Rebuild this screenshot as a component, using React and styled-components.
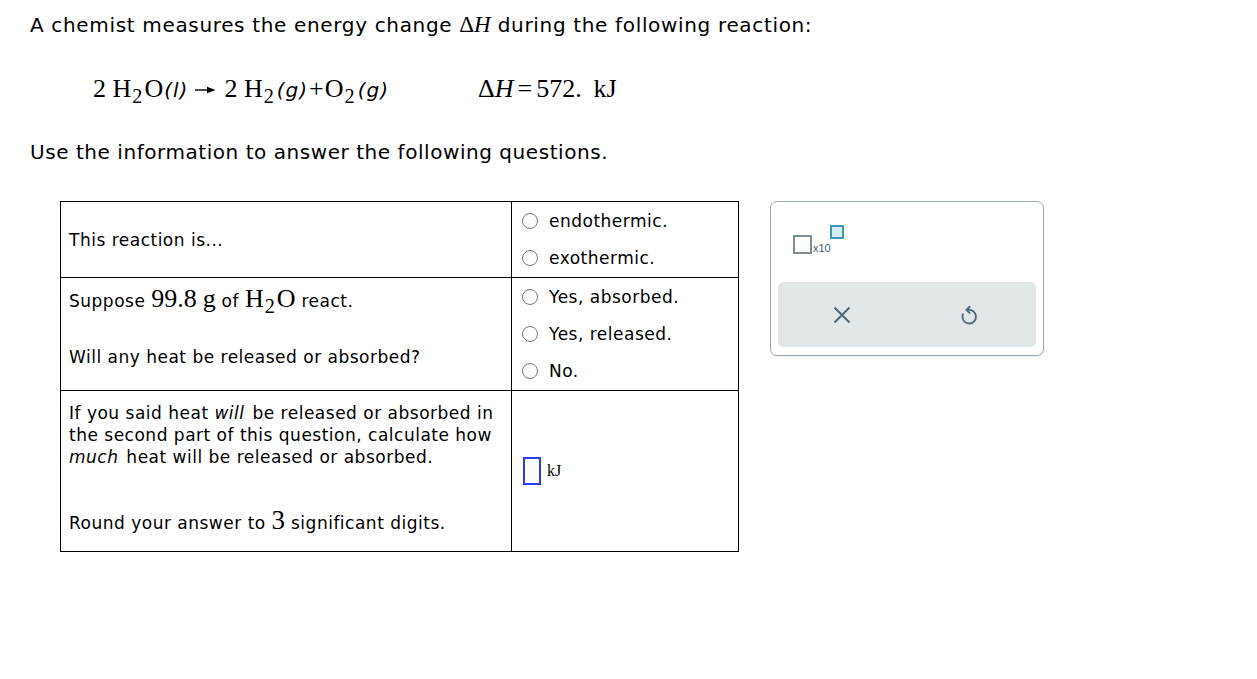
import React from "react";
import styled, { createGlobalStyle } from "styled-components";

const GlobalStyle = createGlobalStyle`
  html, body {
    margin: 0;
    padding: 0;
    background: #ffffff;
  }
  body {
    font-family: "DejaVu Sans", Verdana, sans-serif;
    color: #000;
  }
`;

const Page = styled.div`
  padding: 11px 0 0 30px;
`;

const Heading = styled.p`
  margin: 0;
  font-size: 20px;
  letter-spacing: 0.66px;
  line-height: 28px;
`;

const Serif = styled.span`
  font-family: "Liberation Serif", "Times New Roman", serif;
  font-size: ${(p) => p.size || 26}px;
  font-style: ${(p) => (p.italic ? "italic" : "normal")};
  letter-spacing: 0;
`;

const SansItalic = styled.span`
  font-family: "DejaVu Sans", Verdana, sans-serif;
  font-style: italic;
  font-size: 20px;
  letter-spacing: 1px;
  margin-left: 1px;
`;

const Em = styled.em`
  font-style: italic;
  padding-right: 2px;
`;

const Sub = styled.sub`
  font-size: 0.78em;
  vertical-align: -0.32em;
  line-height: 0;
  margin: 0 2px 0 1px;
`;

const Op = styled.span`
  margin: 0 ${(p) => p.space || 1}px;
`;

const Equation = styled.div`
  display: flex;
  align-items: baseline;
  margin: 28px 0 0 63px;
  height: 44px;
  line-height: 44px;
`;

const EquationLeft = styled.div`
  width: 385px;
  white-space: nowrap;
`;

const Arrow = styled.span`
  display: inline-flex;
  margin: 0 8px 0 7px;
  vertical-align: 3px;
`;

const Instruction = styled.p`
  margin: 27px 0 0 0;
  font-size: 20px;
  letter-spacing: 0.55px;
  line-height: 28px;
`;

const Workspace = styled.div`
  display: flex;
  align-items: flex-start;
  gap: 31px;
  margin: 35px 0 0 60px;
`;

const Table = styled.table`
  border-collapse: collapse;
  font-size: 17px;
  letter-spacing: 0.5px;
  line-height: 22px;
`;

const Cell = styled.td`
  border: 1px solid #000;
  vertical-align: ${(p) => p.valign || "middle"};
  width: ${(p) => p.w}px;
  height: ${(p) => p.h}px;
  padding: ${(p) => p.pad || "0 8px"};
  box-sizing: border-box;
`;

const Options = styled.div`
  display: flex;
  flex-direction: column;
  gap: ${(p) => p.gap}px;
  padding: 0 0 0 10px;
`;

const Option = styled.label`
  display: flex;
  align-items: center;
  gap: 11px;
  height: 22px;
`;

const Radio = styled.span`
  width: 16px;
  height: 16px;
  border: 1px solid #767676;
  border-radius: 50%;
  box-sizing: border-box;
  flex-shrink: 0;
`;

const LeftBlock = styled.div`
  display: flex;
  flex-direction: column;
  justify-content: space-between;
  height: ${(p) => p.h}px;
`;

const Answer = styled.div`
  display: flex;
  align-items: center;
  gap: 6px;
  padding-left: 11px;
`;

const InputBox = styled.span`
  display: inline-block;
  width: 14px;
  height: 24px;
  border: 2px solid #2b3cf5;
  box-sizing: content-box;
`;

const Panel = styled.div`
  width: 274px;
  height: 155px;
  border: 1px solid #9aa8b0;
  border-radius: 7px;
  box-sizing: border-box;
  padding: 0 7px;
  display: flex;
  flex-direction: column;
  box-shadow: 0 1px 2px rgba(0, 0, 0, 0.08);
`;

const Tools = styled.div`
  height: 80px;
  display: flex;
  align-items: flex-start;
  padding: 23px 0 0 15px;
  box-sizing: border-box;
`;

const Exponent = styled.div`
  position: relative;
  display: flex;
  align-items: flex-end;
  height: 29px;
`;

const BaseBox = styled.span`
  width: 15px;
  height: 15px;
  border: 2px solid #7f8e96;
  background: #fff;
`;

const TimesTen = styled.span`
  font-family: "Liberation Sans", Arial, sans-serif;
  font-size: 11px;
  color: #45616e;
  margin-left: 1px;
  line-height: 12px;
`;

const PowerBox = styled.span`
  position: absolute;
  left: 37px;
  top: 0;
  width: 10px;
  height: 10px;
  border: 2px solid #3f97b3;
  background: #d3ebf3;
`;

const ButtonBar = styled.div`
  height: 65px;
  background: #e1e6e9;
  border-radius: 5px;
  display: flex;
  align-items: center;
  justify-content: space-around;
  padding: 0 4px 0 0;
`;

const IconButton = styled.button`
  border: none;
  background: transparent;
  width: 40px;
  height: 40px;
  display: flex;
  align-items: center;
  justify-content: center;
  color: #4a6a78;
  padding: 0;
`;

const ReactionArrow = () => (
  <svg width="21" height="8" viewBox="0 0 21 8">
    <path d="M0 4 H14" stroke="#000" strokeWidth="1.4" />
    <path d="M12 0.8 L20.5 4 L12 7.2 Z" fill="#000" />
  </svg>
);

const CloseIcon = () => (
  <svg width="22" height="22" viewBox="0 0 22 22" fill="none">
    <path d="M3.5 3.5 L18.5 18.5 M18.5 3.5 L3.5 18.5" stroke="currentColor" strokeWidth="2" />
  </svg>
);

const UndoIcon = () => (
  <svg width="26" height="26" viewBox="0 0 24 24" fill="none">
    <path
      d="M6.3 11.3 A6.3 6.3 0 1 0 10.5 7.5"
      stroke="currentColor"
      strokeWidth="1.7"
      strokeLinecap="round"
    />
    <path
      d="M12.6 4.4 L9.6 7.4 L12.6 10"
      stroke="currentColor"
      strokeWidth="1.7"
      strokeLinecap="round"
      strokeLinejoin="round"
    />
  </svg>
);

const App = () => {
  return (
    <>
      <GlobalStyle />
      <Page>
        <Heading>
          A chemist measures the energy change{" "}
          <Serif size={23}>
            Δ<Serif size={23} italic>H</Serif>
          </Serif>{" "}
          during the following reaction:
        </Heading>

        <Equation>
          <EquationLeft>
            <Serif>
              2 H<Sub>2</Sub>O
            </Serif>
            <SansItalic>(l)</SansItalic>
            <Arrow>
              <ReactionArrow />
            </Arrow>
            <Serif>
              2 H<Sub>2</Sub>
            </Serif>
            <SansItalic>(g)</SansItalic>
            <Serif>
              <Op>+</Op>O<Sub>2</Sub>
            </Serif>
            <SansItalic>(g)</SansItalic>
          </EquationLeft>
          <Serif>
            Δ<Serif italic>H</Serif>
            <Op space={4}>=</Op>572.&nbsp;&thinsp;kJ
          </Serif>
        </Equation>

        <Instruction>Use the information to answer the following questions.</Instruction>
      </Page>

      <Workspace>
        <Table>
          <tbody>
            <tr>
              <Cell w={451} h={76}>
                This reaction is...
              </Cell>
              <Cell w={227} h={76} pad="0">
                <Options gap={15}>
                  <Option>
                    <Radio />
                    endothermic.
                  </Option>
                  <Option>
                    <Radio />
                    exothermic.
                  </Option>
                </Options>
              </Cell>
            </tr>
            <tr>
              <Cell w={451} h={113} pad="10px 8px" valign="top">
                <LeftBlock h={80}>
                  <span>
                    Suppose <Serif size={26}>99.8</Serif>&nbsp;
                    <Serif size={26}>g</Serif>&nbsp;of{" "}
                    <Serif size={26}>
                      H<Sub>2</Sub>O
                    </Serif>{" "}
                    react.
                  </span>
                  <span>Will any heat be released or absorbed?</span>
                </LeftBlock>
              </Cell>
              <Cell w={227} h={113} pad="0">
                <Options gap={15}>
                  <Option>
                    <Radio />
                    Yes, absorbed.
                  </Option>
                  <Option>
                    <Radio />
                    Yes, released.
                  </Option>
                  <Option>
                    <Radio />
                    No.
                  </Option>
                </Options>
              </Cell>
            </tr>
            <tr>
              <Cell w={451} h={161} pad="11px 8px 14px" valign="top">
                <LeftBlock h={132}>
                  <span>
                    If you said heat <Em>will</Em> be released or absorbed in the second part of
                    this question, calculate how <Em>much</Em> heat will be released or absorbed.
                  </span>
                  <span>
                    Round your answer to <Serif size={27}>3</Serif> significant digits.
                  </span>
                </LeftBlock>
              </Cell>
              <Cell w={227} h={161} pad="0">
                <Answer>
                  <InputBox />
                  <Serif size={16}>kJ</Serif>
                </Answer>
              </Cell>
            </tr>
          </tbody>
        </Table>

        <Panel>
          <Tools>
            <Exponent>
              <BaseBox />
              <TimesTen>x10</TimesTen>
              <PowerBox />
            </Exponent>
          </Tools>
          <ButtonBar>
            <IconButton aria-label="clear">
              <CloseIcon />
            </IconButton>
            <IconButton aria-label="undo">
              <UndoIcon />
            </IconButton>
          </ButtonBar>
        </Panel>
      </Workspace>
    </>
  );
};

export default App;
